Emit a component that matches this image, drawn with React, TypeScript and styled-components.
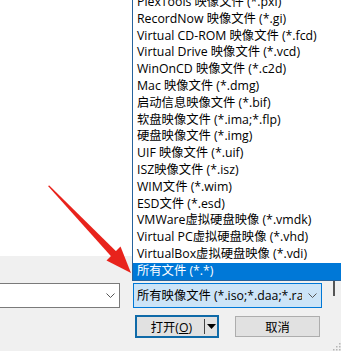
import React from "react";
import styled, { createGlobalStyle } from "styled-components";

const Global = createGlobalStyle`
  html, body { margin: 0; padding: 0; background: #f0f0f0; overflow: hidden; }
  * { box-sizing: border-box; }
`;

const FONT = `"Open Sans", "Noto Sans CJK SC", sans-serif`;

const Page = styled.div`
  position: relative;
  width: 341px;
  height: 351px;
  overflow: hidden;
  background: #f0f0f0;
  font-family: ${FONT};
  font-size: 12px;
  color: #000;
  display: flex;
  flex-direction: column;
`;

const FilePane = styled.div`
  height: 256px;
  width: 100%;
  background: #ffffff;
  flex: none;
`;

const Footer = styled.div`
  display: flex;
  flex-direction: column;
  padding-top: 27px;
`;

const ComboRow = styled.div`
  display: flex;
  gap: 13px;
  margin-left: -2px;
`;

const Combo = styled.div<{ $w: number; $active?: boolean }>`
  width: ${(p) => p.$w}px;
  height: 25px;
  display: flex;
  align-items: center;
  padding: 0 4px 0 3px;
  background: ${(p) => (p.$active ? "#cce4f7" : "#ffffff")};
  border: 1px solid ${(p) => (p.$active ? "#0078d7" : "#7a7a7a")};
  overflow: hidden;
`;

const ComboText = styled.span`
  flex: 1;
  white-space: nowrap;
  overflow: hidden;
  font-size: 12.3px;
  line-height: 23px;
`;

const Chevron = styled.svg`
  flex: none;
  width: 9px;
  height: 6px;
  margin-left: 6px;
`;

const ButtonRow = styled.div`
  display: flex;
  align-items: flex-start;
  gap: 16px;
  margin-top: 7px;
  padding-left: 135px;
`;

const SplitButton = styled.div`
  width: 84px;
  height: 23px;
  display: flex;
  align-items: center;
  background: #e1e1e1;
  border: 2px solid #0f6aa8;
`;

const SplitMain = styled.span`
  flex: 1;
  text-align: center;
  font-size: 12.3px;
  padding-left: 2px;
`;

const Divider = styled.span`
  width: 1px;
  height: 15px;
  background: #444;
`;

const SplitArrow = styled.span`
  width: 12px;
  display: flex;
  justify-content: center;
  align-items: center;
`;

const Button = styled.div`
  width: 85px;
  height: 21px;
  margin-top: 1px;
  display: flex;
  align-items: center;
  justify-content: center;
  background: #e1e1e1;
  border: 1px solid #adadad;
  font-size: 12.3px;
`;

const DropList = styled.ul`
  position: absolute;
  top: -7px;
  left: 132px;
  width: 230px;
  margin: 0;
  padding: 0;
  list-style: none;
  background: #ffffff;
  border: 1px solid #27639c;
`;

const Item = styled.li<{ $selected?: boolean }>`
  height: 16.8px;
  line-height: 16.8px;
  padding-left: 4px;
  white-space: nowrap;
  font-size: 12.3px;
  background: ${(p) => (p.$selected ? "#0078d7" : "transparent")};
  color: ${(p) => (p.$selected ? "#ffffff" : "#000000")};
`;

const Overlay = styled.svg`
  position: absolute;
  left: 0;
  top: 0;
  pointer-events: none;
`;

const EdgeMark = styled.div`
  position: absolute;
  left: 333px;
  top: 281px;
  width: 2px;
  height: 15px;
  background: #555;
`;

const Grip = styled.svg`
  position: absolute;
  right: 0;
  bottom: 0;
`;

const items = [
  "PlexTools 映像文件 (*.pxl)",
  "RecordNow 映像文件 (*.gi)",
  "Virtual CD-ROM 映像文件 (*.fcd)",
  "Virtual Drive 映像文件 (*.vcd)",
  "WinOnCD 映像文件 (*.c2d)",
  "Mac 映像文件 (*.dmg)",
  "启动信息映像文件 (*.bif)",
  "软盘映像文件 (*.ima;*.flp)",
  "硬盘映像文件 (*.img)",
  "UIF 映像文件 (*.uif)",
  "ISZ映像文件 (*.isz)",
  "WIM文件 (*.wim)",
  "ESD文件 (*.esd)",
  "VMWare虚拟硬盘映像 (*.vmdk)",
  "Virtual PC虚拟硬盘映像 (*.vhd)",
  "VirtualBox虚拟硬盘映像 (*.vdi)",
  "所有文件 (*.*)",
];

const ChevronIcon = () => (
  <Chevron viewBox="0 0 9 6">
    <polyline points="0.5,0.5 4.5,4.5 8.5,0.5" fill="none" stroke="#555" strokeWidth="1" />
  </Chevron>
);

export default function App() {
  return (
    <>
      <Global />
      <Page>
        <FilePane />
        <Footer>
          <ComboRow>
            <Combo $w={122}>
              <ComboText />
              <ChevronIcon />
            </Combo>
            <Combo $w={189} $active>
              <ComboText>所有映像文件 (*.iso;*.daa;*.rar;*.nrg)</ComboText>
              <ChevronIcon />
            </Combo>
          </ComboRow>
          <ButtonRow>
            <SplitButton>
              <SplitMain>
                打开(<u>O</u>)
              </SplitMain>
              <Divider />
              <SplitArrow>
                <svg width="9" height="5" viewBox="0 0 9 5">
                  <polygon points="0,0 9,0 4.5,5" fill="#000" />
                </svg>
              </SplitArrow>
            </SplitButton>
            <Button>取消</Button>
          </ButtonRow>
        </Footer>

        <DropList>
          {items.map((t, i) => (
            <Item key={t} $selected={i === items.length - 1}>
              {t}
            </Item>
          ))}
        </DropList>

        <EdgeMark />

        <Overlay width="341" height="351" viewBox="0 0 341 351">
          <polygon points="48,186 49.3,185.4 116.3,251.4 111.7,256.9" fill="#e8231c" />
          <polygon points="131,273 106.5,260.5 120.5,246.5" fill="#e8231c" />
        </Overlay>

        <Grip width="11" height="11" viewBox="0 0 11 11">
          {[
            [9, 3],
            [6, 6],
            [9, 6],
            [3, 9],
            [6, 9],
            [9, 9],
          ].map(([x, y]) => (
            <rect key={`${x}-${y}`} x={x} y={y} width="1.5" height="1.5" fill="#b5b5b5" />
          ))}
        </Grip>
      </Page>
    </>
  );
}
